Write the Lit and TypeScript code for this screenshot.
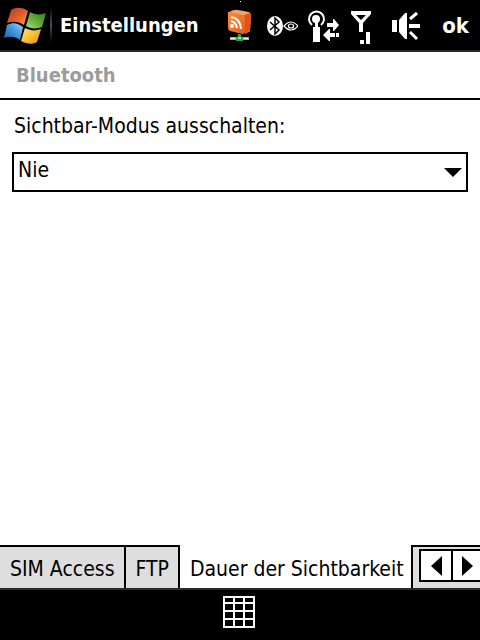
import { LitElement, html, css, svg } from "lit";
import { customElement, state } from "lit/decorators.js";

const flag = html`
  <svg class="flag" viewBox="0 0 48 50" aria-hidden="true">
    <defs>
      <linearGradient id="red" x1="0" y1="0" x2="1" y2="1">
        <stop offset="0" stop-color="#a8381c" /><stop offset="0.6" stop-color="#e8642c" /><stop offset="1" stop-color="#f8a468" />
      </linearGradient>
      <linearGradient id="green" x1="1" y1="0" x2="0" y2="1">
        <stop offset="0" stop-color="#2c7c1c" /><stop offset="0.6" stop-color="#6cb43c" /><stop offset="1" stop-color="#b8e08c" />
      </linearGradient>
      <linearGradient id="blue" x1="0" y1="1" x2="1" y2="0">
        <stop offset="0" stop-color="#1c5ca8" /><stop offset="0.6" stop-color="#4c9ce0" /><stop offset="1" stop-color="#a8d8f8" />
      </linearGradient>
      <linearGradient id="yellow" x1="1" y1="1" x2="0" y2="0">
        <stop offset="0" stop-color="#e09010" /><stop offset="0.6" stop-color="#fcc83c" /><stop offset="1" stop-color="#fcec9c" />
      </linearGradient>
    </defs>
    <path fill="url(#red)" d="M11 10C16 7 22 7 28 11L24 25C18 21 13 21 7 23Z" />
    <path fill="url(#green)" d="M30 12C35 15 40 15 46 13L42 27C37 29 31 29 26 26Z" />
    <path fill="url(#blue)" d="M7 25C13 22 18 23 23 27L20 40C15 36 9 36 4 38Z" />
    <path fill="url(#yellow)" d="M25 28C30 31 36 31 41 29L37 42C32 45 27 44 21 41Z" />
  </svg>`;

const feed = html`
  <svg class="icon" viewBox="226 0 32 50" aria-hidden="true">
    <defs>
      <linearGradient id="face" x1="0" y1="0" x2="1" y2="1">
        <stop offset="0" stop-color="#fc8c44" /><stop offset="1" stop-color="#ec5c14" />
      </linearGradient>
    </defs>
    <rect x="240" y="1" width="1" height="1" fill="#fff" />
    <path fill="#f8a070" d="M229 12Q235 9 238 10L249 12Q251 13 251 16L250 31L245 34L245 17Z" />
    <path fill="#dc5418" d="M244 15L250 13Q251 14 251 16L250 30L245 34Z" />
    <path fill="url(#face)" d="M228 13Q228 11 230 12L243 15Q245 15 245 18V32Q245 34 243 34L230 31Q228 30 228 28Z" />
    <g fill="none" stroke="#fff" stroke-width="2">
      <path d="M231 21Q236 22 237 28" /><path d="M231 17Q240 18 241 29" />
    </g>
    <circle cx="232" cy="26" r="2" fill="#fff" />
    <path fill="#a8b0b0" d="M230 37H249V40H230Z" /><path fill="#e8ecec" d="M231 38H235V39H231ZM244 38H248V39H244Z" />
    <path fill="#38a048" d="M238 34H241V36L243 38V41H236V38L238 36Z" /><rect x="238" y="37" width="3" height="2" fill="#90dc98" />
  </svg>`;

const bluetooth = html`
  <svg class="icon" viewBox="266 0 32 50" aria-hidden="true">
    <ellipse cx="275" cy="26" rx="8" ry="10" fill="#fff" />
    <path d="M270 22L279 30L275 34V18L279 22L270 30" fill="none" stroke="#000" stroke-width="1.5" />
    <path fill="none" stroke="#fff" stroke-width="1.2" d="M284 26Q291 18 298 26Q291 34 284 26Z" />
    <ellipse cx="291" cy="26" rx="2.6" ry="2" fill="none" stroke="#fff" stroke-width="1.2" />
  </svg>`;

const antenna = html`
  <svg class="icon" viewBox="306 0 34 50" aria-hidden="true">
    <circle cx="316" cy="19" r="4" fill="#fff" />
    <path fill="#fff" d="M315 20H318V27H320V42H313V27H315Z" />
    <path fill="none" stroke="#fff" stroke-width="2" d="M312 25A7.5 7.5 0 1 1 321 25" />
    <path fill="#fff" d="M327 23H333V19H334L339 25L334 31H333V27H327Z" />
    <path fill="#fff" d="M323 35L329 29H330V33H335V37H330V41H329ZM336 33H339V37H336Z" />
  </svg>`;

const signal = html`
  <svg class="icon" viewBox="348 0 34 50" aria-hidden="true">
    <path fill="#fff" fill-rule="evenodd" d="M351 11H371V14L363 23V32H359V23L351 14ZM356 15L361 20L366 15Z" />
    <path fill="#fff" d="M360 40H364V44H360ZM366 32H370V44H366Z" />
  </svg>`;

const speaker = html`
  <svg class="icon" viewBox="390 0 32 50" aria-hidden="true">
    <path fill="#fff" d="M392 20H397V32H392ZM399 20L405 13H407V39H405L399 32ZM409 24H420V28H409Z" />
    <path stroke="#fff" stroke-width="3" d="M410 19L417 13M410 32L417 39" />
  </svg>`;

const gridLines = svg`
  <path fill="none" stroke="#fff" stroke-width="2"
    d="M1 1H31V31H1ZM11 1V31M21 1V31M1 7H31M1 15H31M1 23H31" />`;

@customElement("app-root")
export class AppRoot extends LitElement {
  @state() private active = 2;

  private tabs = ["SIM Access", "FTP", "Dauer der Sichtbarkeit"];

  static styles = css`
    :host {
      display: flex;
      flex-direction: column;
      min-height: 100vh;
      background: #fff;
      color: #000;
      font-family: "DejaVu Sans Condensed", "Noto Sans", sans-serif;
      font-size: 21px;
      line-height: 24px;
    }
    * {
      box-sizing: border-box;
    }
    button {
      font: inherit;
      color: inherit;
      margin: 0;
      padding: 0;
      border: 0;
      border-radius: 0;
      background: none;
    }
    svg {
      display: block;
      flex: none;
    }
    .top {
      display: flex;
      align-items: center;
      height: 52px;
      background: #000;
      color: #fff;
      border-bottom: 2px solid #2c2c2c;
      font-weight: bold;
    }
    .flag {
      width: 48px;
      height: 50px;
    }
    .start {
      padding-right: 2px;
    }
    .rule {
      width: 2px;
      height: 36px;
      background: linear-gradient(#000, #505050, #000);
    }
    .title {
      flex: 1;
      margin: 0;
      padding-left: 8px;
      font-size: 20px;
    }
    .status {
      display: flex;
      gap: 8px;
    }
    .icon {
      width: auto;
      height: 50px;
    }
    .ok {
      padding: 2px 11px 0 20px;
      font-size: 22px;
    }
    .heading {
      margin: 0;
      padding: 11px 16px;
      border-bottom: 2px solid #000;
      color: #9c9c9c;
      font-size: 20px;
      line-height: 24px;
    }
    .content {
      flex: 1;
      padding: 14px 12px;
    }
    label {
      display: block;
      padding: 0 2px;
      margin-bottom: 14px;
    }
    .field {
      display: grid;
      align-items: center;
    }
    .field > * {
      grid-area: 1 / 1;
    }
    select {
      appearance: none;
      width: 100%;
      height: 40px;
      margin: 0;
      padding: 0 32px 4px 4px;
      border: 2px solid #000;
      border-radius: 0;
      background: #fff;
      color: #000;
      font: inherit;
    }
    .arrow {
      justify-self: end;
      margin-right: 6px;
      pointer-events: none;
    }
    .tabs {
      display: flex;
      height: 43px;
      overflow: hidden;
    }
    .tablist {
      display: flex;
      flex: none;
    }
    .tab {
      padding: 2px 9px 0 10px;
      border-top: 2px solid #000;
      border-right: 2px solid #000;
      background: #dedede;
      white-space: nowrap;
    }
    .tab.active {
      padding: 4px 7px 0 10px;
      border-top: 0;
      background: #fff;
    }
    .rest {
      display: flex;
      flex: 1;
      min-width: 0;
      padding: 2px 0 6px 6px;
      border-top: 2px solid #000;
      background: #dedede;
    }
    .step {
      display: flex;
      flex: none;
      align-items: center;
      justify-content: center;
      width: 34px;
      border: 2px solid #000;
      background: #fff;
    }
    .step + .step {
      border-left: 0;
      width: 32px;
    }
    .bottom {
      display: flex;
      align-items: flex-start;
      justify-content: center;
      height: 52px;
      padding: 6px 2px 0 0;
      border-top: 2px solid #2c2c2c;
      background: #000;
    }
    .keys {
      width: 32px;
      height: 32px;
    }
  `;

  private move(by: number) {
    this.active = Math.max(0, Math.min(this.tabs.length - 1, this.active + by));
  }

  render() {
    return html`
      <header class="top">
        <button class="start" aria-label="Start">${flag}</button>
        <span class="rule"></span>
        <h1 class="title">Einstellungen</h1>
        <div class="status">${feed}${bluetooth}${antenna}${signal}${speaker}</div>
        <button class="ok">ok</button>
      </header>
      <h2 class="heading">Bluetooth</h2>
      <main class="content">
        <label for="timeout">Sichtbar-Modus ausschalten:</label>
        <div class="field">
          <select id="timeout">
            <option>Nie</option>
          </select>
          <svg class="arrow" width="18" height="10" viewBox="0 0 18 10" aria-hidden="true">
            <path d="M0 1H18L9 10Z" />
          </svg>
        </div>
      </main>
      <nav class="tabs">
        <div class="tablist" role="tablist">
          ${this.tabs.map(
            (name, i) => html`<button
              class="tab ${i === this.active ? "active" : ""}"
              role="tab"
              aria-selected=${i === this.active ? "true" : "false"}
              @click=${() => (this.active = i)}
            >${name}</button>`
          )}
        </div>
        <div class="rest">
          <button class="step" aria-label="Zurück" @click=${() => this.move(-1)}>
            <svg width="12" height="22" viewBox="0 0 12 22"><path d="M12 1V21L1 11Z" /></svg>
          </button>
          <button class="step" aria-label="Weiter" @click=${() => this.move(1)}>
            <svg width="12" height="22" viewBox="0 0 12 22"><path d="M0 1V21L11 11Z" /></svg>
          </button>
        </div>
      </nav>
      <footer class="bottom">
        <button aria-label="Tastatur">
          <svg class="keys" viewBox="0 0 32 32">${gridLines}</svg>
        </button>
      </footer>
    `;
  }
}
